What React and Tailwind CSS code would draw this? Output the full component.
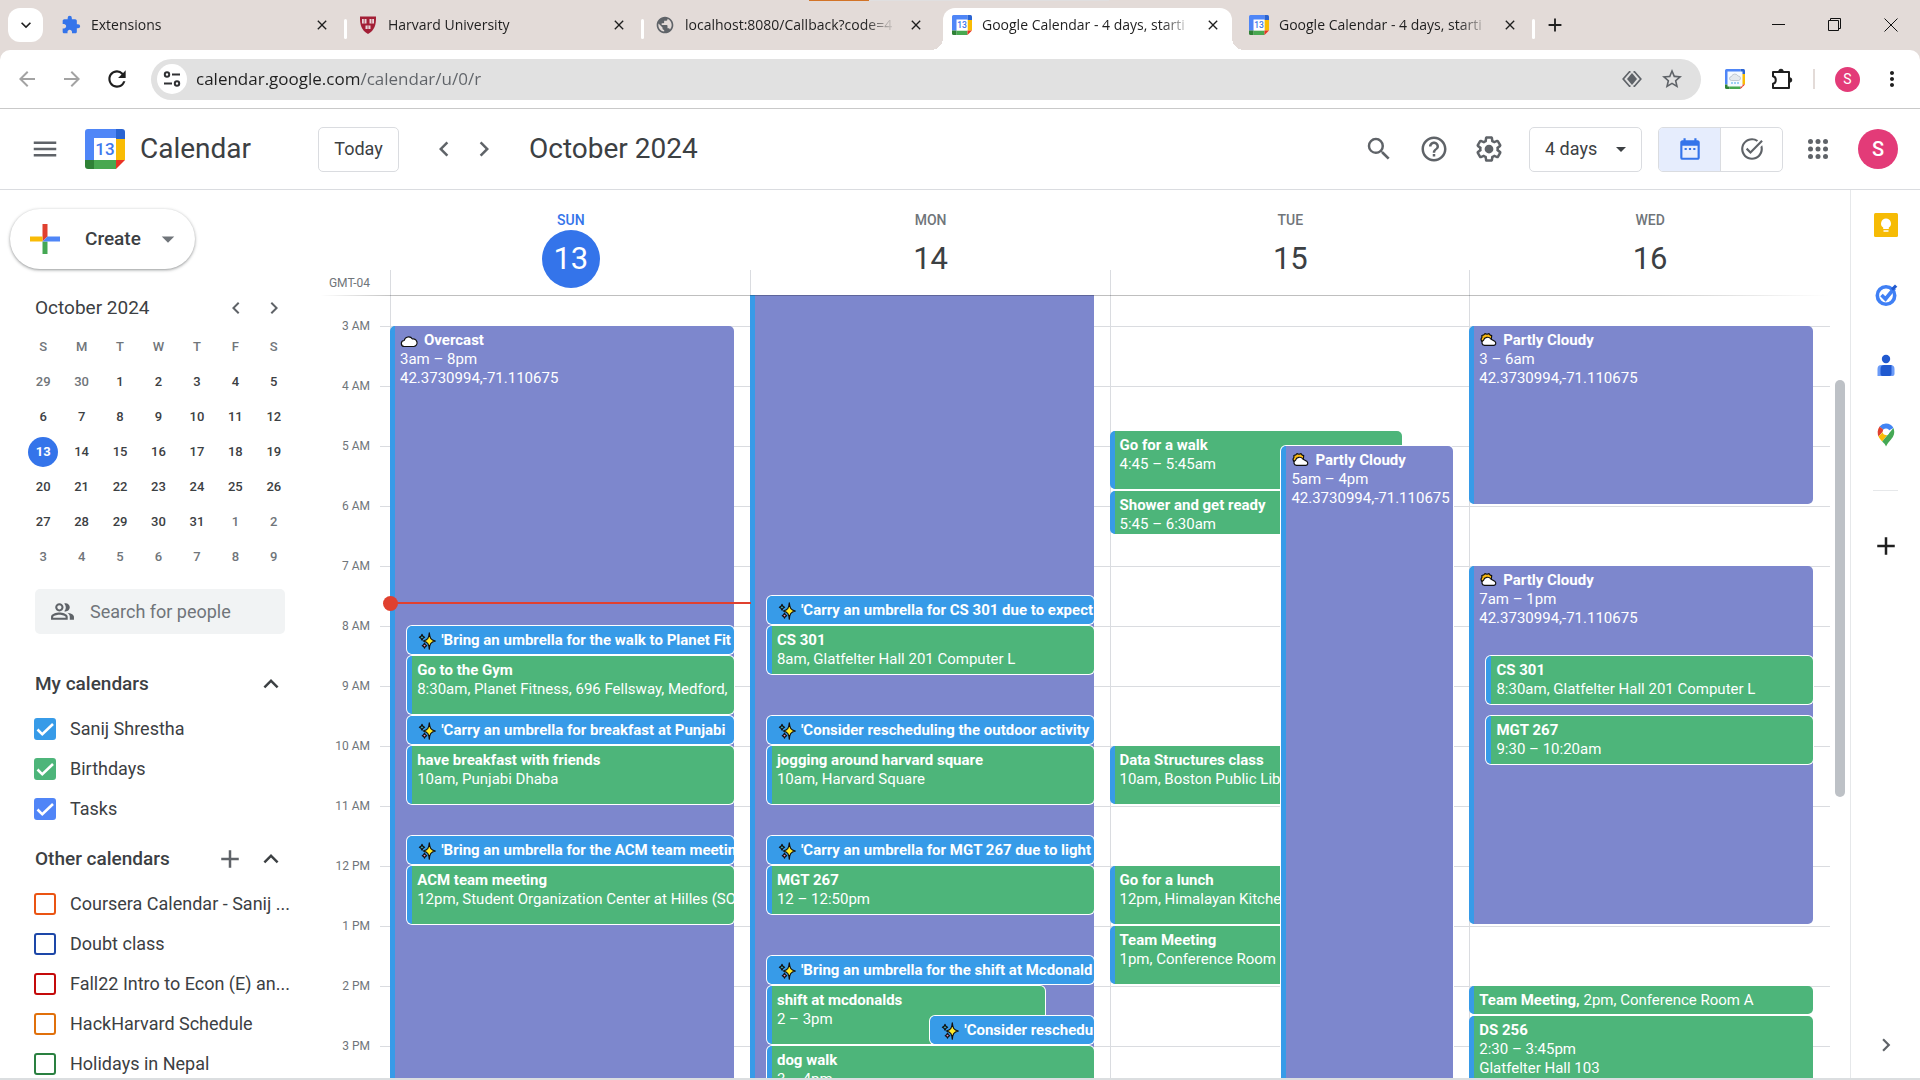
import { useState } from "react";
import {
  MdAdd,
  MdArrowBack,
  MdArrowDropDown,
  MdArrowForward,
  MdChevronLeft,
  MdChevronRight,
  MdClose,
  MdDateRange,
  MdExpandLess,
  MdExpandMore,
  MdExtension,
  MdHelpOutline,
  MdMenu,
  MdMoreVert,
  MdOutlinePeopleAlt,
  MdPublic,
  MdRefresh,
  MdSearch,
  MdStarBorder,
  MdTaskAlt,
} from "react-icons/md";

const HOUR = 60;
const FIRST_HOUR = 3;
const TOP_OFFSET = 31;

const tabs = [
  { title: "Extensions", icon: "extension" },
  { title: "Harvard University", icon: "harvard" },
  { title: "localhost:8080/Callback?code=4", icon: "globe" },
  { title: "Google Calendar - 4 days, starti", icon: "calendar", active: true },
  { title: "Google Calendar - 4 days, starti", icon: "calendar" },
];

const weeks = [
  [29, 30, 1, 2, 3, 4, 5],
  [6, 7, 8, 9, 10, 11, 12],
  [13, 14, 15, 16, 17, 18, 19],
  [20, 21, 22, 23, 24, 25, 26],
  [27, 28, 29, 30, 31, 1, 2],
  [3, 4, 5, 6, 7, 8, 9],
];

const myCalendars = [
  { name: "Sanij Shrestha", color: "border-[#379be8] checked:bg-[#379be8]", on: true },
  { name: "Birthdays", color: "border-[#4db57a] checked:bg-[#4db57a]", on: true },
  { name: "Tasks", color: "border-[#5085f7] checked:bg-[#5085f7]", on: true },
];

const otherCalendars = [
  { name: "Coursera Calendar - Sanij ...", color: "border-[#ea5413] checked:bg-[#ea5413]" },
  { name: "Doubt class", color: "border-[#1d47a8] checked:bg-[#1d47a8]" },
  { name: "Fall22 Intro to Econ (E) an...", color: "border-[#c40a0a] checked:bg-[#c40a0a]" },
  { name: "HackHarvard Schedule", color: "border-[#e0700b] checked:bg-[#e0700b]" },
  { name: "Holidays in Nepal", color: "border-[#2a8040] checked:bg-[#2a8040]" },
];

// start and end are in hours, left and width in percent of the day column
const days = [
  {
    name: "SUN",
    date: 13,
    today: true,
    events: [
      { kind: "weather", icon: "cloud", title: "Overcast", lines: ["3am – 8pm", "42.3730994,-71.110675"], start: 3, end: 20 },
      { kind: "tip", title: "'Bring an umbrella for the walk to Planet Fit", start: 8, end: 8.5, left: 5 },
      { kind: "plan", title: "Go to the Gym", lines: ["8:30am, Planet Fitness, 696 Fellsway, Medford,"], start: 8.5, end: 9.5, left: 5 },
      { kind: "tip", title: "'Carry an umbrella for breakfast at Punjabi", start: 9.5, end: 10, left: 5 },
      { kind: "plan", title: "have breakfast with friends", lines: ["10am, Punjabi Dhaba"], start: 10, end: 11, left: 5 },
      { kind: "tip", title: "'Bring an umbrella for the ACM team meetin", start: 11.5, end: 12, left: 5 },
      { kind: "plan", title: "ACM team meeting", lines: ["12pm, Student Organization Center at Hilles (SO"], start: 12, end: 13, left: 5 },
    ],
  },
  {
    name: "MON",
    date: 14,
    events: [
      { kind: "weather", start: 0, end: 20 },
      { kind: "tip", title: "'Carry an umbrella for CS 301 due to expect", start: 7.5, end: 8, left: 5 },
      { kind: "plan", title: "CS 301", lines: ["8am, Glatfelter Hall 201 Computer L"], start: 8, end: 8.83, left: 5 },
      { kind: "tip", title: "'Consider rescheduling the outdoor activity", start: 9.5, end: 10, left: 5 },
      { kind: "plan", title: "jogging around harvard square", lines: ["10am, Harvard Square"], start: 10, end: 11, left: 5 },
      { kind: "tip", title: "'Carry an umbrella for MGT 267 due to light", start: 11.5, end: 12, left: 5 },
      { kind: "plan", title: "MGT 267", lines: ["12 – 12:50pm"], start: 12, end: 12.83, left: 5 },
      { kind: "tip", title: "'Bring an umbrella for the shift at Mcdonald", start: 13.5, end: 14, left: 5 },
      { kind: "plan", title: "shift at mcdonalds", lines: ["2 – 3pm"], start: 14, end: 15, left: 5, width: 81 },
      { kind: "tip", title: "'Consider reschedu", start: 14.5, end: 15, left: 52.5 },
      { kind: "plan", title: "dog walk", lines: ["3 – 4pm"], start: 15, end: 16, left: 5 },
    ],
  },
  {
    name: "TUE",
    date: 15,
    events: [
      { kind: "plan", title: "Go for a walk", lines: ["4:45 – 5:45am"], start: 4.75, end: 5.75, width: 85 },
      { kind: "plan", title: "Shower and get ready", lines: ["5:45 – 6:30am"], start: 5.75, end: 6.5, width: 85 },
      { kind: "plan", title: "Data Structures class", lines: ["10am, Boston Public Lib"], start: 10, end: 11, width: 85 },
      { kind: "plan", title: "Go for a lunch", lines: ["12pm, Himalayan Kitche"], start: 12, end: 13, width: 85 },
      { kind: "plan", title: "Team Meeting", lines: ["1pm, Conference Room"], start: 13, end: 14, width: 85 },
      { kind: "weather", icon: "partly", title: "Partly Cloudy", lines: ["5am – 4pm", "42.3730994,-71.110675"], start: 5, end: 16, left: 50 },
    ],
  },
  {
    name: "WED",
    date: 16,
    events: [
      { kind: "weather", icon: "partly", title: "Partly Cloudy", lines: ["3 – 6am", "42.3730994,-71.110675"], start: 3, end: 6 },
      { kind: "weather", icon: "partly", title: "Partly Cloudy", lines: ["7am – 1pm", "42.3730994,-71.110675"], start: 7, end: 13 },
      { kind: "plan", title: "CS 301", lines: ["8:30am, Glatfelter Hall 201 Computer L"], start: 8.5, end: 9.33, left: 5 },
      { kind: "plan", title: "MGT 267", lines: ["9:30 – 10:20am"], start: 9.5, end: 10.33, left: 5 },
      { kind: "plan", title: "Team Meeting,", inline: " 2pm, Conference Room A", start: 14, end: 14.5 },
      { kind: "plan", title: "DS 256", lines: ["2:30 – 3:45pm", "Glatfelter Hall 103"], start: 14.5, end: 15.75 },
    ],
  },
];

const hours = ["3 AM", "4 AM", "5 AM", "6 AM", "7 AM", "8 AM", "9 AM", "10 AM", "11 AM", "12 PM", "1 PM", "2 PM", "3 PM"];

const CalendarLogo = ({ className, children }) => (
  <svg viewBox="0 0 40 40" className={className} aria-hidden="true">
    <path d="M3 0h28v10H10v21H0V3a3 3 0 0 1 3-3z" fill="#4f86f7" />
    <path d="M31 0h6a3 3 0 0 1 3 3v7h-9z" fill="#2a64d2" />
    <path d="M31 10h9v21h-9z" fill="#f9bc04" />
    <path d="M9 31h22v9H9z" fill="#48a850" />
    <path d="M0 31h9v9H3a3 3 0 0 1-3-3z" fill="#2f8136" />
    <path d="M31 31h9l-9 9z" fill="#ea3323" />
    <path d="M9 9h22v22H9z" fill="#fff" />
    {children || (
      <text x="20" y="26" textAnchor="middle" fontSize="17" fontWeight="500" fontFamily="Roboto, sans-serif" fill="#4078ee">
        13
      </text>
    )}
  </svg>
);

const HarvardShield = () => (
  <svg viewBox="0 0 20 20" className="h-5 w-5" aria-hidden="true">
    <path d="M2 1.500h16c.3 8-1.500 14-8 17.500C3.500 15.500 1.700 9.500 2 1.500z" fill="#a31f36" />
    <path d="M4 4h4.500v4.500H4zM11.500 4H16v4.500h-4.500zM7.500 10.500h5V14h-5z" fill="#e8d5d8" />
    <path d="M6.200 4v4.500M13.800 4v4.500M10 10.500V14" stroke="#a31f36" strokeWidth=".7" />
  </svg>
);

const TabIcon = ({ name }) => {
  if (name === "extension") return <MdExtension className="h-5 w-5 text-[#3474ea]" />;
  if (name === "harvard") return <HarvardShield />;
  if (name === "globe") return <MdPublic className="h-5 w-5 text-[#5f6368]" />;
  return <CalendarLogo className="h-5 w-5" />;
};

const TuneIcon = () => (
  <svg viewBox="0 0 20 20" className="h-5 w-5" fill="none" stroke="#303134" strokeWidth="2" aria-hidden="true">
    <circle cx="5" cy="5.500" r="2.200" />
    <path d="M10 5.500h8M2 14.500h8" />
    <circle cx="15" cy="14.500" r="2.200" />
  </svg>
);

const LensIcon = () => (
  <svg viewBox="0 0 20 20" className="h-5 w-5" fill="none" stroke="#5f6368" strokeWidth="1.700" aria-hidden="true">
    <path d="M8.500 2.800h-1L1.200 10l6.300 7.200h1M11.500 2.800h1l6.300 7.200-6.300 7.200h-1" />
    <path d="M10 4 15 10l-5 6-5-6z" fill="#5f6368" stroke="none" />
  </svg>
);

const PuzzleIcon = () => (
  <svg viewBox="0 0 24 24" className="h-6 w-6" fill="none" stroke="#1f1f1f" strokeWidth="2" strokeLinejoin="round" aria-hidden="true">
    <path d="M4 5h16v16H4v-4.200c1.700-.4 2.800-1.900 2.800-3.800S5.700 9.600 4 9.200z" />
    <path d="M9.700 4.500a2.300 2.300 0 0 1 4.600 0zM20.500 10.700a2.300 2.300 0 0 1 0 4.600z" fill="#1f1f1f" strokeWidth="1" />
  </svg>
);

const AppsIcon = () => (
  <svg viewBox="0 0 24 24" className="h-[30px] w-[30px]" fill="currentColor" aria-hidden="true">
    {[6, 12, 18].map((cy) => [6, 12, 18].map((cx) => <circle key={`${cx}-${cy}`} cx={cx} cy={cy} r="2" />))}
  </svg>
);

const GearIcon = () => (
  <svg viewBox="0 0 24 24" className="h-[30px] w-[30px]" fill="currentColor" aria-hidden="true">
    <path d="M13.850 22.250h-3.700c-.74 0-1.360-.54-1.450-1.270l-.27-1.890c-.27-.14-.53-.29-.79-.46l-1.800.72c-.7.26-1.470-.03-1.810-.65L2.200 15.530c-.35-.66-.2-1.440.36-1.880l1.530-1.190c-.01-.15-.02-.3-.02-.46 0-.15.01-.31.02-.46l-1.520-1.190c-.59-.45-.74-1.260-.37-1.880l1.850-3.190c.34-.62 1.110-.9 1.790-.63l1.810.73c.26-.17.52-.32.78-.46l.27-1.910c.09-.7.71-1.250 1.440-1.250h3.700c.74 0 1.360.54 1.450 1.270l.27 1.890c.27.14.53.29.79.46l1.800-.72c.71-.26 1.480.03 1.820.65l1.840 3.180c.36.66.2 1.440-.36 1.880l-1.520 1.190c.01.15.02.3.02.46s-.01.31-.02.46l1.520 1.190c.56.45.72 1.230.37 1.860l-1.860 3.220c-.34.62-1.110.9-1.800.63l-1.800-.72c-.26.17-.52.32-.78.46l-.27 1.910c-.1.68-.72 1.220-1.460 1.220zm-3.230-2h2.760l.37-2.550.53-.22c.44-.18.88-.44 1.340-.78l.45-.34 2.380.96 1.380-2.400-2.030-1.580.07-.56c.03-.26.06-.51.06-.78s-.03-.53-.06-.78l-.07-.56 2.030-1.580-1.390-2.400-2.390.96-.45-.35c-.42-.32-.87-.58-1.330-.77l-.52-.22-.37-2.550h-2.760l-.37 2.550-.53.21c-.44.19-.88.44-1.340.79l-.45.33-2.380-.95-1.390 2.390 2.030 1.580-.07.56a7 7 0 0 0-.06.79c0 .26.02.53.06.78l.07.56-2.030 1.580 1.380 2.400 2.390-.96.45.35c.43.33.86.58 1.330.77l.53.22.38 2.550z" />
    <circle cx="12" cy="12" r="3.500" />
  </svg>
);

const CreateIcon = () => (
  <svg viewBox="0 0 30 30" className="h-[30px] w-[30px]" aria-hidden="true">
    <path d="M12.500 0h5v12.500l-5 5z" fill="#e0402f" />
    <path d="M0 12.500h12.500v5H0z" fill="#f9bb06" />
    <path d="M12.500 17.500h5V30h-5z" fill="#45a854" />
    <path d="M17.500 12.500H30v5H12.500z" fill="#4f86f7" />
  </svg>
);

const Sparkles = () => (
  <svg viewBox="0 0 18 18" className="h-[18px] w-[18px]" stroke="#111" strokeWidth="1.200" strokeLinejoin="round" aria-hidden="true">
    <path d="M4 2.300c.3 1.700.8 2.300 2.600 2.900C4.800 5.800 4.300 6.400 4 8.100c-.3-1.700-.8-2.300-2.600-2.900 1.800-.6 2.300-1.200 2.600-2.900z" fill="#3fb6c8" />
    <path d="M6.500 11.200c.3 1.500.7 2 2.300 2.500-1.600.5-2 1-2.300 2.500-.3-1.500-.7-2-2.300-2.500 1.600-.5 2-1 2.300-2.500z" fill="#f08bb4" />
    <path d="M11.300.8c.4 5.200 1.500 7.200 6 8.200-4.500 1-5.600 3-6 8.200-.4-5.200-1.500-7.200-6-8.200 4.500-1 5.600-3 6-8.200z" fill="#fde92c" />
  </svg>
);

const WeatherIcon = ({ name }) => (
  <svg viewBox="0 0 18 16" className="h-4 w-[18px]" stroke="#111" strokeWidth="1.200" strokeLinejoin="round" aria-hidden="true">
    {name === "cloud" ? (
      <path d="M4.500 13.500a3 3 0 0 1-.3-6A4.500 4.500 0 0 1 12.400 6a3.800 3.800 0 0 1 1.600 7.500z" fill="#fff" />
    ) : (
      <>
        <path d="M2.500 8 2 6l1-1.700L2.800 2.500l2-.6L6 .6l2 .7 2-.7 1.200 1.500 1.500.5-.4 3.400-7 4z" fill="#fbb912" />
        <path d="M5.500 12.300a2.700 2.700 0 0 1-.9-5.200C5.300 4.100 9.800 3.100 11.800 6l4.300 2.600c1.300 1.500.6 3.700-1.300 3.700z" fill="#fff" />
      </>
    )}
  </svg>
);

const KeepIcon = () => (
  <svg viewBox="0 0 24 24" className="h-6 w-6" aria-hidden="true">
    <rect width="24" height="24" rx="1.500" fill="#f6bb05" />
    <path d="M12 5.500a5 5 0 0 0-2.800 9.100v1.400h5.600v-1.400A5 5 0 0 0 12 5.500zM9.500 17.200h5v1.600h-5z" fill="#fff" />
  </svg>
);

const TasksIcon = () => (
  <svg viewBox="0 0 24 24" className="h-6 w-6" aria-hidden="true">
    <circle cx="12" cy="12.500" r="8.700" fill="#fff" stroke="#4080f5" strokeWidth="3.600" />
    <path d="m7.500 12 4 4L20.500 5" fill="none" stroke="#4080f5" strokeWidth="3.600" />
    <path d="m17 5.500 4-4 2.300 2.300-4.300 4z" fill="#2059cf" />
  </svg>
);

const ContactsIcon = () => (
  <svg viewBox="0 0 24 24" className="h-6 w-6" aria-hidden="true">
    <circle cx="12" cy="6" r="4.200" fill="#2059cf" />
    <path d="M3.500 23v-7a4 4 0 0 1 4-4h9a4 4 0 0 1 4 4v5a2 2 0 0 1-2 2z" fill="#6b9bf8" />
    <path d="M6.500 21v-5a4 4 0 0 1 4-4h7v9a2 2 0 0 1-2 2h-7a2 2 0 0 1-2-2z" fill="#2059cf" />
  </svg>
);

const MapsIcon = () => (
  <svg viewBox="0 0 24 24" className="h-6 w-6" aria-hidden="true">
    <path d="M12 .5c3.500 0 6 1.700 7.400 4.500L12 9 5.600 3.400A8.400 8.400 0 0 1 12 .5z" fill="#4285f4" />
    <path d="M5.600 3.400 10 7.200l-5.500 6.300C3.200 10.500 3.300 6.300 5.600 3.400z" fill="#e0402f" />
    <path d="m9 9 4 3.500-4.800 6c-1.500-1.700-3-3.300-3.700-5z" fill="#f9bb06" />
    <path d="M19.400 5c2 5 .2 8.500-2.400 11.500-2.200 2.500-3.500 4-5 7-.8-2-2-3.500-3.800-5z" fill="#45a854" />
    <circle cx="12" cy="8.800" r="3.200" fill="#fff" />
  </svg>
);

const TabStrip = () => (
  <div className="relative flex h-[50px] items-start bg-[#e3dbd8] pl-2 font-['Open_Sans',sans-serif]">
    <div className="absolute top-0 left-[809px] flex h-px w-[300px] bg-[#e0dfe0]">
      <div className="h-px w-[60px] bg-[#d27327]" />
    </div>
    <button className="mt-2 flex h-[34px] w-[35px] items-center justify-center rounded-xl bg-white" aria-label="Search tabs">
      <MdExpandMore className="h-5 w-5 text-[#1f1f1f]" />
    </button>
    <div className="ml-[9px] flex">
      {tabs.map((tab, i) => (
        <div key={i} className="flex pt-2">
          <div
            className={`relative flex w-[289px] items-center pr-[11px] pl-[9px] ${
              tab.active ? "h-[42px] rounded-t-xl bg-white pb-2" : "h-[34px]"
            }`}
          >
            {tab.active && (
              <>
                <div className="absolute bottom-0 -left-3 h-3 w-3 bg-[radial-gradient(circle_at_0_0,transparent_12px,white_12px)]" />
                <div className="absolute -right-3 bottom-0 h-3 w-3 bg-[radial-gradient(circle_at_100%_0,transparent_12px,white_12px)]" />
              </>
            )}
            <TabIcon name={tab.icon} />
            <span className="mr-3 ml-[10px] flex-1 overflow-hidden mask-r-from-85% text-sm whitespace-nowrap text-[#1f1f1f]">
              {tab.title}
            </span>
            <button aria-label="Close tab">
              <MdClose className="h-4 w-4 text-[#1f1f1f]" />
            </button>
          </div>
          <div className="flex w-2 items-center justify-center">
            {[0, 1, 4].includes(i) && <div className="h-5 w-[3px] rounded bg-white" />}
          </div>
        </div>
      ))}
    </div>
    <button className="mt-[14px] ml-[7px]" aria-label="New tab">
      <MdAdd className="h-[22px] w-[22px] text-[#1f1f1f]" />
    </button>
    <div className="mt-[17px] mr-[21px] ml-auto flex gap-10">
      <button aria-label="Minimize">
        <svg viewBox="0 0 16 16" className="h-4 w-4" stroke="#111" aria-hidden="true">
          <path d="M1 7.500h13" />
        </svg>
      </button>
      <button aria-label="Restore">
        <svg viewBox="0 0 16 16" className="h-4 w-4" fill="none" stroke="#111" aria-hidden="true">
          <path d="M1.500 3.500h10v10h-10zM3.500 3.500v-2h10v10h-2" />
        </svg>
      </button>
      <button aria-label="Close">
        <svg viewBox="0 0 16 16" className="h-4 w-4" stroke="#111" aria-hidden="true">
          <path d="m1.500 1.500 13 13m0-13-13 13" />
        </svg>
      </button>
    </div>
  </div>
);

const Toolbar = () => (
  <div className="bg-[#e3dbd8]">
    <div className="flex h-[59px] items-center rounded-t-[10px] border-b border-[#c9c9c9] bg-white pl-[15px]">
      <button aria-label="Back">
        <MdArrowBack className="h-6 w-6 text-[#a3a3a3]" />
      </button>
      <button className="ml-[21px]" aria-label="Forward">
        <MdArrowForward className="h-6 w-6 text-[#a3a3a3]" />
      </button>
      <button className="ml-5" aria-label="Reload">
        <MdRefresh className="h-[26px] w-[26px] text-[#1f1f1f]" />
      </button>
      <div className="ml-[21px] flex h-[41px] flex-1 items-center rounded-full bg-[#e1e1e1] pr-[17px] pl-[6px]">
        <button className="flex h-[30px] w-[30px] items-center justify-center rounded-full bg-white" aria-label="Site information">
          <TuneIcon />
        </button>
        <input
          aria-label="Address"
          defaultValue="calendar.google.com/calendar/u/0/r"
          className="ml-[9px] flex-1 bg-[linear-gradient(to_right,#1f1f1f_165px,#5f6368_165px)] bg-clip-text font-['Open_Sans',sans-serif] text-[17px] text-transparent outline-none"
        />
        <button aria-label="Search this page">
          <LensIcon />
        </button>
        <button className="ml-[18px]" aria-label="Bookmark">
          <MdStarBorder className="h-6 w-6 text-[#5f6368]" />
        </button>
      </div>
      <button className="ml-6" aria-label="Weather extension">
        <CalendarLogo className="h-5 w-5">
          <path d="M5 5h30v30H5z" fill="#f5faff" />
          <path d="M13 23a4 4 0 0 1 0-8 7 7 0 0 1 13-1 4.500 4.500 0 0 1 1 9z" fill="#e4e9ee" stroke="#9aa5b0" />
          <path d="M14 26v4M20 26v4M26 26v4" stroke="#4aa8ea" strokeWidth="2" />
        </CalendarLogo>
      </button>
      <button className="ml-6" aria-label="Extensions">
        <PuzzleIcon />
      </button>
      <div className="ml-5 h-5 w-[2px] bg-[#e3dbd8]" />
      <button className="ml-5 flex h-[25px] w-[25px] items-center justify-center rounded-full bg-[#e33b78] text-sm text-white">
        S
      </button>
      <button className="mr-4 ml-5" aria-label="Menu">
        <MdMoreVert className="h-6 w-6 text-[#1f1f1f]" />
      </button>
    </div>
  </div>
);

const Header = () => (
  <header className="flex h-[81px] shrink-0 items-center border-b border-[#dadce0] pr-[22px] text-[#5f6368]">
    <div className="flex w-[318px] items-center pl-[30px]">
      <button aria-label="Main menu">
        <MdMenu className="h-[30px] w-[30px]" />
      </button>
      <CalendarLogo className="ml-[25px] h-10 w-10" />
      <span className="ml-[15px] text-[28px] text-[#3c4043]">Calendar</span>
    </div>
    <button className="h-[45px] w-[81px] rounded-[5px] border border-[#dadce0] text-lg text-[#3c4043]">Today</button>
    <button className="ml-[30px]" aria-label="Previous period">
      <MdChevronLeft className="h-[30px] w-[30px]" />
    </button>
    <button className="ml-[10px]" aria-label="Next period">
      <MdChevronRight className="h-[30px] w-[30px]" />
    </button>
    <h1 className="ml-[30px] text-[28px] text-[#3c4043]">October 2024</h1>
    <div className="ml-auto flex items-center gap-[25px]">
      <button aria-label="Search">
        <MdSearch className="h-[30px] w-[30px]" />
      </button>
      <button aria-label="Support">
        <MdHelpOutline className="h-[30px] w-[30px]" />
      </button>
      <button aria-label="Settings">
        <GearIcon />
      </button>
      <div className="relative">
        <select
          aria-label="View"
          className="h-[45px] w-[113px] appearance-none rounded-[5px] border border-[#dadce0] bg-white pl-[15px] text-lg text-[#3c4043]"
        >
          <option>4 days</option>
          <option>Week</option>
          <option>Month</option>
        </select>
        <MdArrowDropDown className="pointer-events-none absolute top-[10px] right-[9px] h-6 w-6 text-[#3c4043]" />
      </div>
    </div>
    <div className="ml-4 flex h-[45px] w-[125px] overflow-hidden rounded-[5px] border border-[#dadce0]">
      <button className="flex flex-1 items-center justify-center border-r border-[#dadce0] bg-[#e6edfd]" aria-label="Calendar view">
        <MdDateRange className="h-[26px] w-[26px] text-[#3474ea]" />
      </button>
      <button className="flex flex-1 items-center justify-center" aria-label="Tasks view">
        <MdTaskAlt className="h-[26px] w-[26px]" />
      </button>
    </div>
    <button className="ml-5" aria-label="Google apps">
      <AppsIcon />
    </button>
    <button className="ml-[25px] flex h-10 w-10 items-center justify-center rounded-full bg-[#e33b78] text-xl font-medium text-white">
      S
    </button>
  </header>
);

const MiniCalendar = () => (
  <div>
    <div className="mt-[19px] flex h-10 items-center pr-[34px] pl-[35px] text-[#5f6368]">
      <h2 className="flex-1 text-[19px] text-[#3c4043]">October 2024</h2>
      <button aria-label="Previous month">
        <MdChevronLeft className="h-6 w-6" />
      </button>
      <button className="ml-[14px]" aria-label="Next month">
        <MdChevronRight className="h-6 w-6" />
      </button>
    </div>
    <table className="mt-px ml-6 w-[269px] table-fixed text-center text-[13px] font-medium text-[#3c4043]">
      <thead>
        <tr className="h-[35px] text-[#70757a]">
          {["S", "M", "T", "W", "T", "F", "S"].map((d, i) => (
            <th key={i} className="font-medium">
              {d}
            </th>
          ))}
        </tr>
      </thead>
      <tbody>
        {weeks.map((week, w) => (
          <tr key={w} className="h-[35px]">
            {week.map((day) => {
              const otherMonth = (w === 0 && day > 20) || (w > 3 && day < 20);
              const today = w === 2 && day === 13;
              return (
                <td key={day} className={otherMonth ? "text-[#70757a]" : ""}>
                  {today ? (
                    <span className="mx-auto flex h-[30px] w-[30px] items-center justify-center rounded-full bg-[#3474ea] font-bold text-white">
                      {day}
                    </span>
                  ) : (
                    day
                  )}
                </td>
              );
            })}
          </tr>
        ))}
      </tbody>
    </table>
  </div>
);

const CalendarCheck = ({ name, color, on }) => {
  const [checked, setChecked] = useState(Boolean(on));
  return (
    <label className="flex h-10 items-center pl-[34px] text-lg text-[#3c4043]">
      <span className="grid shrink-0 items-center">
        <input
          type="checkbox"
          checked={checked}
          onChange={() => setChecked(!checked)}
          className={`col-start-1 row-start-1 h-[22px] w-[22px] appearance-none rounded-[3px] border-2 ${color}`}
        />
        {checked && (
          <svg viewBox="0 0 22 22" className="pointer-events-none col-start-1 row-start-1 h-[22px] w-[22px]" fill="none" stroke="#fff" strokeWidth="2.600" aria-hidden="true">
            <path d="m3.500 11.500 4.800 4.800L19 6" />
          </svg>
        )}
      </span>
      <span className="ml-[14px] whitespace-nowrap">{name}</span>
    </label>
  );
};

const Sidebar = () => (
  <aside className="w-80 shrink-0 overflow-hidden pt-[19px]">
    <button className="ml-[10px] flex h-[60px] w-[185px] items-center rounded-full bg-white pl-5 shadow-[0_1px_3px_1px_rgba(60,64,67,0.2),0_1px_2px_rgba(60,64,67,0.3)]">
      <CreateIcon />
      <span className="ml-[25px] text-[19px] font-medium text-[#3c4043]">Create</span>
      <MdArrowDropDown className="ml-3 h-[30px] w-[30px] text-[#70757a]" />
    </button>
    <MiniCalendar />
    <label className="mt-[15px] ml-[35px] flex h-[45px] w-[250px] items-center rounded-[5px] bg-[#f1f3f4] pl-[15px] text-[#5f6368]">
      <MdOutlinePeopleAlt className="h-[25px] w-[25px] shrink-0" />
      <input
        aria-label="Search for people"
        placeholder="Search for people"
        className="ml-[15px] w-44 text-lg outline-none placeholder:text-[#70757a]"
      />
    </label>
    <div className="mt-[30px] mb-[5px] flex h-10 items-center pr-[34px] pl-[35px] text-[#3c4043]">
      <h2 className="flex-1 text-[19px] font-medium">My calendars</h2>
      <button aria-label="Collapse my calendars">
        <MdExpandLess className="h-[30px] w-[30px]" />
      </button>
    </div>
    {myCalendars.map((c) => (
      <CalendarCheck key={c.name} {...c} />
    ))}
    <div className="mt-[10px] mb-[5px] flex h-10 items-center pr-[34px] pl-[35px] text-[#3c4043]">
      <h2 className="flex-1 text-[19px] font-medium">Other calendars</h2>
      <button aria-label="Add other calendars">
        <MdAdd className="h-[30px] w-[30px] text-[#5f6368]" />
      </button>
      <button className="ml-[11px]" aria-label="Collapse other calendars">
        <MdExpandLess className="h-[30px] w-[30px]" />
      </button>
    </div>
    {otherCalendars.map((c) => (
      <CalendarCheck key={c.name} {...c} />
    ))}
  </aside>
);

const kinds = {
  weather: "bg-[#7d87cd]",
  plan: "bg-[#4db57a]",
  tip: "bg-[#379be8]",
};

const Event = ({ kind, icon, title, lines = [], inline, start, end, left = 0, width }) => (
  <div
    className={`absolute overflow-hidden rounded-[5px] border-l-[5px] border-[#379be8] pl-[5px] text-[15px] leading-[19px] whitespace-nowrap text-white ${kinds[kind]} ${
      left ? "ring-1 ring-white" : ""
    }`}
    style={{
      top: TOP_OFFSET + (start - FIRST_HOUR) * HOUR,
      height: Math.round((end - start) * HOUR) - 2,
      left: `${left}%`,
      width: `${width || 100 - left}%`,
    }}
  >
    {title && (
      <div className="flex items-center pt-[5px] font-bold">
        {kind === "tip" && (
          <span className="mr-[5px] ml-px">
            <Sparkles />
          </span>
        )}
        {icon && (
          <span className="mr-[6px]">
            <WeatherIcon name={icon} />
          </span>
        )}
        <span>{title}</span>
        {inline && <span className="font-normal whitespace-pre">{inline}</span>}
      </div>
    )}
    {lines.map((line) => (
      <div key={line}>{line}</div>
    ))}
  </div>
);

const DayGrid = () => (
  <main className="flex min-w-0 flex-1 flex-col">
    <div className="flex h-[105px] shrink-0 pr-[21px]">
      <div className="flex w-[70px] items-end justify-end pr-5 pb-1 text-xs leading-4 text-[#70757a]">GMT-04</div>
      {days.map((day) => (
        <div key={day.name} className="relative flex flex-1 flex-col items-center pt-5 pl-[2px]">
          <div className="absolute bottom-0 left-0 h-[25px] w-px bg-[#dadce0]" />
          <span className={`text-sm font-medium ${day.today ? "text-[#3474ea]" : "text-[#70757a]"}`}>{day.name}</span>
          <span
            className={`flex h-[58px] w-[58px] items-center justify-center rounded-full text-[31px] ${
              day.today ? "bg-[#3474ea] text-white" : "text-[#3c4043]"
            }`}
          >
            {day.date}
          </span>
        </div>
      ))}
    </div>
    <div className="z-10 mr-5 -mb-px h-px shrink-0 bg-[linear-gradient(to_right,transparent,rgba(0,0,0,0.25)_5%,rgba(0,0,0,0.25)_85%,transparent)]" />
    <div className="flex min-h-0 flex-1 overflow-hidden">
      <div className="w-[60px] shrink-0 pt-px">
        {hours.map((h) => (
          <div key={h} className="flex h-[60px] items-center justify-end pr-[10px] text-xs text-[#70757a]">
            {h}
          </div>
        ))}
      </div>
      <div className="relative flex-1">
        <div className="h-[31px]" />
        {hours.map((h) => (
          <div key={h} className="h-[60px] border-t border-[#dadce0]" />
        ))}
        <div className="absolute inset-y-0 right-px left-[10px] grid grid-cols-4">
          {days.map((day) => (
            <div key={day.name} className="relative border-l border-[#dadce0]">
              <div className="relative mr-4 -ml-px h-full">
                {day.events.map((event, i) => (
                  <Event key={i} {...event} />
                ))}
              </div>
              {day.today && (
                <div className="absolute top-[307px] -right-px left-0 z-10 h-[2px] bg-[#e0402f]">
                  <div className="absolute -top-[6px] -left-2 h-[15px] w-[15px] rounded-full bg-[#e0402f]" />
                </div>
              )}
            </div>
          ))}
        </div>
      </div>
      <div className="flex w-5 shrink-0 justify-center pt-[85px]">
        <div className="h-[417px] w-[10px] rounded-full bg-[#bdc1c6]" />
      </div>
    </div>
  </main>
);

const SidePanel = () => (
  <aside className="flex w-[70px] shrink-0 flex-col items-center border-l border-[#e6e8ea] pt-[23px] pb-5">
    <div className="flex flex-col gap-[46px]">
      <button aria-label="Keep">
        <KeepIcon />
      </button>
      <button aria-label="Tasks">
        <TasksIcon />
      </button>
      <button aria-label="Contacts">
        <ContactsIcon />
      </button>
      <button aria-label="Maps">
        <MapsIcon />
      </button>
    </div>
    <div className="mt-[43px] h-px w-[25px] bg-[#e6e8ea]" />
    <button className="mt-10" aria-label="Get add-ons">
      <MdAdd className="h-[30px] w-[30px] text-[#1f1f1f]" />
    </button>
    <button className="mt-auto" aria-label="Hide side panel">
      <MdChevronRight className="h-[26px] w-[26px] text-[#5f6368]" />
    </button>
  </aside>
);

const App = () => {
  return (
    <div className="flex h-screen flex-col overflow-hidden bg-white font-[Roboto,sans-serif]">
      <TabStrip />
      <Toolbar />
      <Header />
      <div className="flex min-h-0 flex-1">
        <Sidebar />
        <DayGrid />
        <SidePanel />
      </div>
      <div className="h-[2px] shrink-0 bg-[#dbdee0]" />
    </div>
  );
};

export default App;
